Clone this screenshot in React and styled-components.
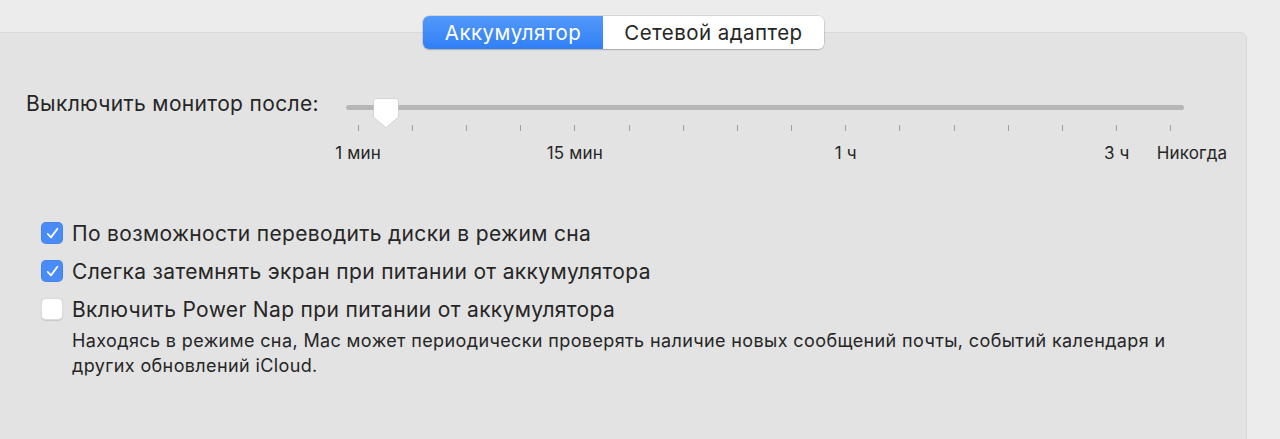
import React from "react";
import styled, { createGlobalStyle } from "styled-components";

const Global = createGlobalStyle`
  html, body { margin: 0; padding: 0; background: #ececec; }
  body {
    font-family: Inter, "Noto Sans", "Liberation Sans", sans-serif;
    color: #262626;
    -webkit-font-smoothing: antialiased;
    overflow: hidden;
  }
`;

const Page = styled.div`
  width: 1280px;
  height: 439px;
  padding-top: 16px;
  box-sizing: border-box;
  overflow: hidden;
`;

const TabBar = styled.div`
  display: flex;
  justify-content: flex-start;
  padding-left: 423px;
  position: relative;
  z-index: 2;
  margin-bottom: -17px;
`;

const Segmented = styled.div`
  display: flex;
  height: 33px;
  border-radius: 6px;
  background: #fff;
  box-shadow: 0 0 0 0.5px rgba(0, 0, 0, 0.18), 0 1px 1.5px rgba(0, 0, 0, 0.18);
  overflow: hidden;
`;

const Segment = styled.div`
  display: flex;
  align-items: center;
  justify-content: center;
  width: ${(p) => p.$w}px;
  font-size: 20.5px;
  letter-spacing: 0.45px;
  color: ${(p) => (p.$active ? "#fff" : "#262626")};
  background: ${(p) =>
    p.$active ? "linear-gradient(#5499fb, #2f7ff5)" : "#fff"};
`;

const Panel = styled.div`
  margin-left: -10px;
  width: 1257px;
  height: 420px;
  background: #e3e3e3;
  border: 1px solid #d9d9d9;
  border-radius: 7px;
  box-sizing: border-box;
  padding-top: 45px;
`;

const SliderRow = styled.div`
  display: flex;
  align-items: flex-start;
`;

const RowLabel = styled.div`
  width: 340px;
  padding-left: 35px;
  box-sizing: border-box;
  font-size: 21px;
  letter-spacing: 0.35px;
  line-height: 24px;
  padding-top: 14px;
  white-space: nowrap;
`;

const SliderBox = styled.div`
  display: grid;
  grid-template-columns: repeat(16, 54.2px);
  grid-template-rows: 47px 6px 32px;
  align-items: start;
`;

const Track = styled.div`
  grid-column: 1 / -1;
  grid-row: 1;
  position: relative;
  margin: 27px 14px 0 15px;
  height: 5px;
  border-radius: 3px;
  background: #b6b6b6;
`;

const Thumb = styled.svg`
  position: absolute;
  left: 27px;
  top: -7px;
  width: 26px;
  height: 30px;
  overflow: visible;
`;

const Tick = styled.div`
  grid-row: 2;
  grid-column: ${(p) => p.$col};
  justify-self: center;
  width: 1px;
  height: 6px;
  background: #a0a0a0;
`;

const TickLabel = styled.div`
  grid-row: 3;
  grid-column: ${(p) => p.$col};
  justify-self: ${(p) => (p.$start ? "start" : "center")};
  margin-left: ${(p) => (p.$start ? "13px" : "0")};
  white-space: nowrap;
  font-size: 17px;
  letter-spacing: 0.15px;
  padding-top: 12px;
  line-height: 20px;
`;

const Options = styled.div`
  margin-top: 51px;
  padding-left: 50px;
  display: flex;
  flex-direction: column;
`;

const OptionRow = styled.label`
  display: flex;
  align-items: center;
  gap: 9px;
  height: 38px;
  font-size: 21px;
  letter-spacing: 0.34px;
  white-space: nowrap;
`;

const Box = styled.span`
  flex: none;
  width: 22px;
  height: 22px;
  border-radius: 5px;
  box-sizing: border-box;
  display: flex;
  align-items: center;
  justify-content: center;
  background: ${(p) => (p.$on ? "#4a8cf7" : "#fff")};
  box-shadow: ${(p) =>
    p.$on
      ? "inset 0 0 0 0.5px rgba(0,0,0,0.12)"
      : "inset 0 0 0 1px rgba(0,0,0,0.14), 0 0.5px 1px rgba(0,0,0,0.12)"};
`;

const Hint = styled.div`
  padding-left: 31px;
  width: 1110px;
  font-size: 18px;
  letter-spacing: 0.38px;
  line-height: 25px;
`;

const Check = () => (
  <svg width="15" height="15" viewBox="0 0 15 15">
    <path
      d="M2.8 8 L6 11.4 L12.4 2.8"
      fill="none"
      stroke="#fff"
      strokeWidth="1.8"
      strokeLinecap="round"
      strokeLinejoin="round"
    />
  </svg>
);

const Option = ({ on, children }) => (
  <OptionRow>
    <Box $on={on}>{on && <Check />}</Box>
    {children}
  </OptionRow>
);

const labels = [
  { col: 1, text: "1 мин" },
  { col: 5, text: "15 мин" },
  { col: 10, text: "1 ч" },
  { col: 15, text: "3 ч" },
  { col: 16, text: "Никогда", start: true },
];

export default function App() {
  return (
    <Page>
      <Global />
      <TabBar>
        <Segmented>
          <Segment $active $w={180}>Аккумулятор</Segment>
          <Segment $w={221}>Сетевой адаптер</Segment>
        </Segmented>
      </TabBar>
      <Panel>
        <SliderRow>
          <RowLabel>Выключить монитор после:</RowLabel>
          <SliderBox>
            <Track>
              <Thumb viewBox="0 0 26 30">
                <path
                  d="M3.5 0.5 H22.5 A3 3 0 0 1 25.5 3.5 V19 L13 29.5 L0.5 19 V3.5 A3 3 0 0 1 3.5 0.5 Z"
                  fill="#fff"
                  stroke="rgba(0,0,0,0.14)"
                  strokeWidth="0.8"
                />
              </Thumb>
            </Track>
            {Array.from({ length: 16 }).map((_, i) => (
              <Tick key={i} $col={i + 1} />
            ))}
            {labels.map((l) => (
              <TickLabel key={l.text} $col={l.col} $start={l.start}>
                {l.text}
              </TickLabel>
            ))}
          </SliderBox>
        </SliderRow>
        <Options>
          <Option on>По возможности переводить диски в режим сна</Option>
          <Option on>Слегка затемнять экран при питании от аккумулятора</Option>
          <Option>Включить Power Nap при питании от аккумулятора</Option>
          <Hint>
            Находясь в режиме сна, Mac может периодически проверять наличие
            новых сообщений почты, событий календаря и других обновлений iCloud.
          </Hint>
        </Options>
      </Panel>
    </Page>
  );
}
